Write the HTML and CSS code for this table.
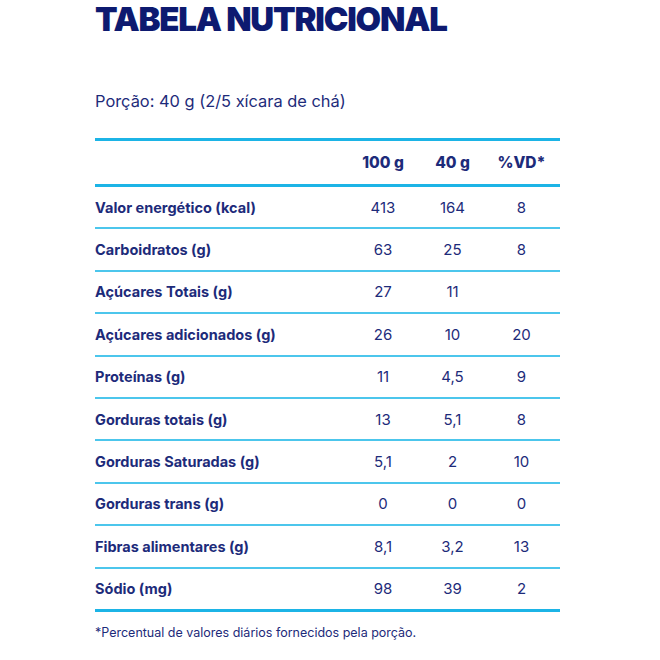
FILE: index.html
```html
<!DOCTYPE html>
<html lang="pt-BR">
<head>
<meta charset="utf-8">
<link rel="stylesheet" href="styles.css">
</head>
<body>
<main class="page">
  <h1 class="title">TABELA NUTRICIONAL</h1>
  <p class="portion">Porção: 40 g (2/5 xícara de chá)</p>
  <div class="table">
    <div class="row head">
      <span class="label"></span><span class="val">100 g</span><span class="val">40 g</span><span class="val">%VD*</span>
    </div>
    <div class="row"><span class="label">Valor energético (kcal)</span><span class="val">413</span><span class="val">164</span><span class="val">8</span></div>
    <div class="row"><span class="label">Carboidratos (g)</span><span class="val">63</span><span class="val">25</span><span class="val">8</span></div>
    <div class="row"><span class="label">Açúcares Totais (g)</span><span class="val">27</span><span class="val">11</span><span class="val"></span></div>
    <div class="row"><span class="label">Açúcares adicionados (g)</span><span class="val">26</span><span class="val">10</span><span class="val">20</span></div>
    <div class="row"><span class="label">Proteínas (g)</span><span class="val">11</span><span class="val">4,5</span><span class="val">9</span></div>
    <div class="row"><span class="label">Gorduras totais (g)</span><span class="val">13</span><span class="val">5,1</span><span class="val">8</span></div>
    <div class="row"><span class="label">Gorduras Saturadas (g)</span><span class="val">5,1</span><span class="val">2</span><span class="val">10</span></div>
    <div class="row"><span class="label">Gorduras trans (g)</span><span class="val">0</span><span class="val">0</span><span class="val">0</span></div>
    <div class="row"><span class="label">Fibras alimentares (g)</span><span class="val">8,1</span><span class="val">3,2</span><span class="val">13</span></div>
    <div class="row last"><span class="label">Sódio (mg)</span><span class="val">98</span><span class="val">39</span><span class="val">2</span></div>
  </div>
  <p class="note">*Percentual de valores diários fornecidos pela porção.</p>
</main>
</body>
</html>
```
FILE: styles.css
```css
html, body {
  margin: 0;
  padding: 0;
  background: #ffffff;
}
body {
  font-family: Inter, "Noto Sans", sans-serif;
  color: #1d2b7a;
}
.page {
  width: 465px;
  margin-left: 95px;
  padding-top: 1px;
}
.title {
  margin: 0;
  font-size: 33px;
  line-height: 36px;
  font-weight: 900;
  color: #0d1a70;
  letter-spacing: -1.2px;
}
.portion {
  margin: 54px 0 0 0;
  font-size: 16.4px;
  line-height: 20px;
  font-weight: 400;
}
.table {
  margin-top: 27px;
  border-top: 3px solid #1cb4e6;
}
.row {
  display: grid;
  grid-template-columns: 1fr 70px 69px 69px;
  padding-right: 4px;
  align-items: center;
  height: 40.4px;
  border-bottom: 2px solid #4cc6ec;
  font-size: 15px;
}
.row.head {
  height: 43px;
  border-bottom: 3px solid #1cb4e6;
}
.row.last {
  border-bottom: 3px solid #1cb4e6;
}
.head .val {
  font-weight: 800;
  font-size: 15.5px;
}
.label {
  font-weight: 700;
  font-size: 14.5px;
}
.val {
  text-align: center;
  font-weight: 400;
}
.note {
  margin: 13px 0 0 0;
  font-size: 12.5px;
  line-height: 16px;
}
```
